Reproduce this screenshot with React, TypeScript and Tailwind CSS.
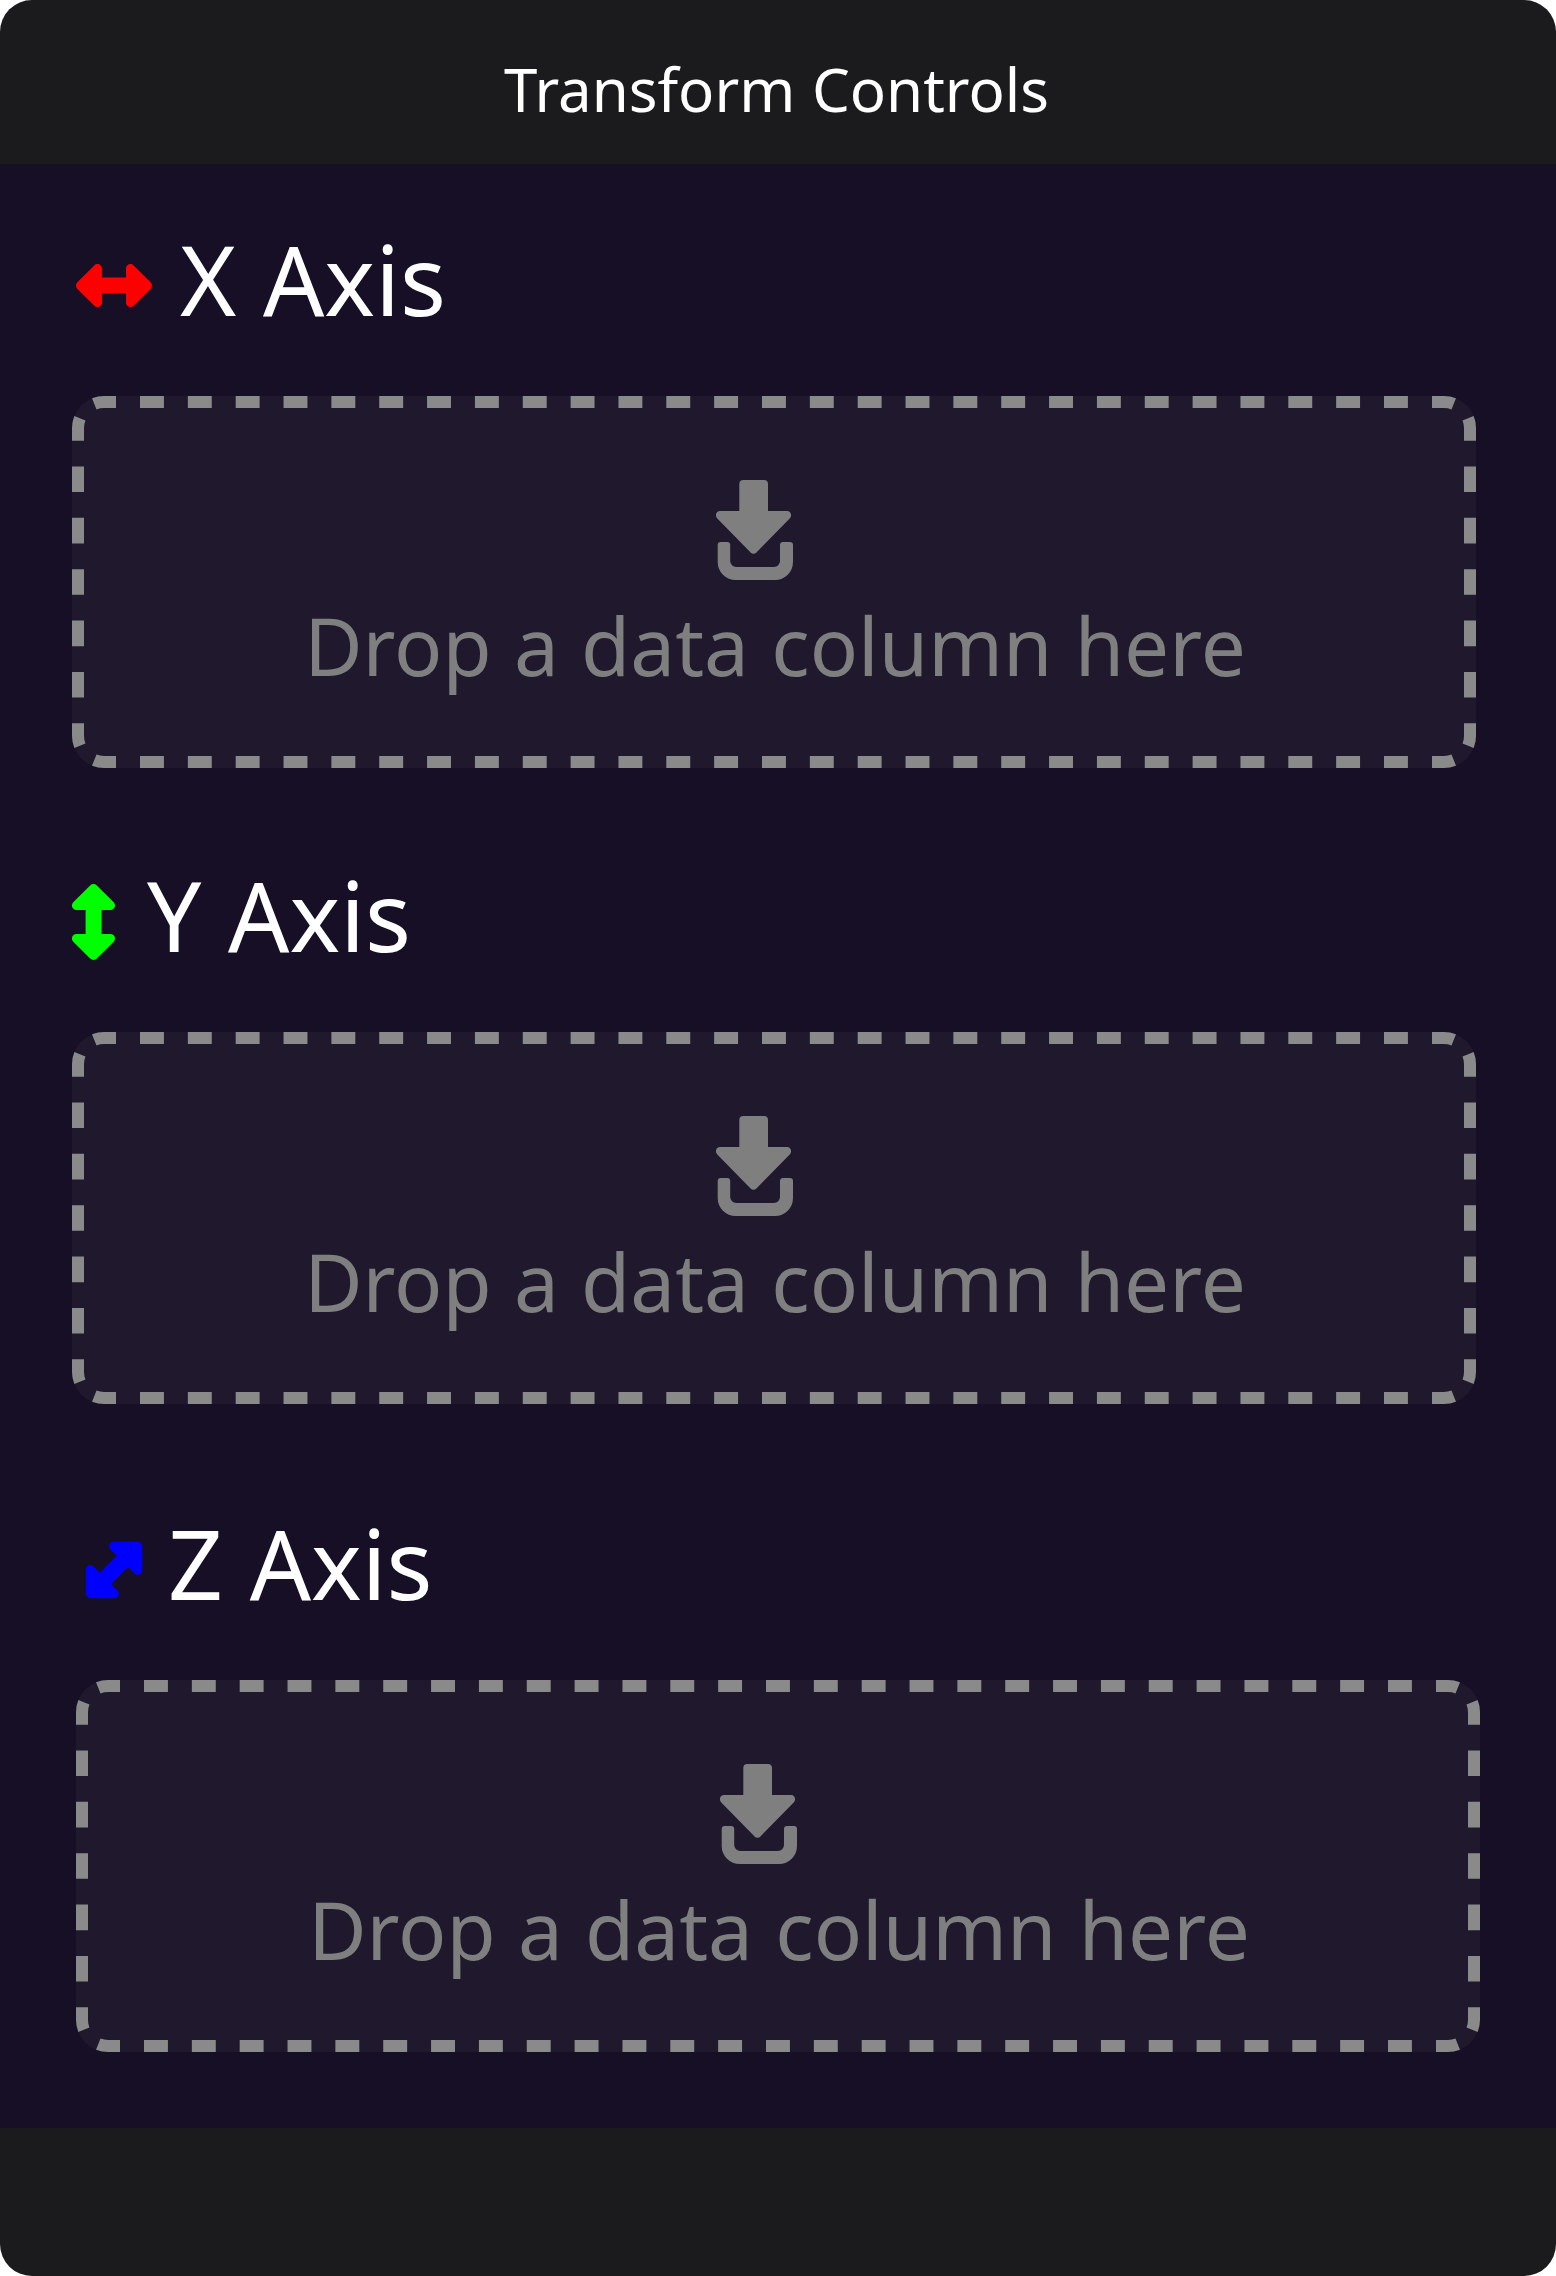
type Axis = {
  label: string;
  headingClass: string;
  sectionClass: string;
  icon: "horizontal" | "vertical" | "diagonal";
};

const AXES: Axis[] = [
  { label: "X Axis", headingClass: "ml-1 gap-7", sectionClass: "ml-[72px]", icon: "horizontal" },
  { label: "Y Axis", headingClass: "gap-8", sectionClass: "ml-[72px] mt-[91px]", icon: "vertical" },
  { label: "Z Axis", headingClass: "gap-4", sectionClass: "ml-[76px] mt-[103px]", icon: "diagonal" },
];

const ARROW =
  "M26 13.5V4.6C26 .5 21.1 -1.4 18.3 1.4L1.4 18.3a4.6 4.6 0 0 0 0 6.6L18.3 41.8C21.1 44.6 26 42.7 26 38.6V29.5H50V38.6C50 42.7 54.9 44.6 57.7 41.8L74.6 24.9a4.6 4.6 0 0 0 0-6.6L57.7 1.4C54.9 -1.4 50 .5 50 4.6V13.5Z";

function AxisIcon({ kind }: { kind: Axis["icon"] }) {
  if (kind === "vertical") {
    return (
      <svg className="mt-[14px] h-[76px] w-[43px] shrink-0 overflow-visible" viewBox="0 0 43 76" fill="#00ff00">
        <path d={ARROW} transform="translate(43.1 0) rotate(90)" />
      </svg>
    );
  }
  if (kind === "diagonal") {
    return (
      <svg className="mt-[14px] size-[76px] shrink-0 overflow-visible" viewBox="0 0 76 76" fill="#0000ff">
        <path d={ARROW} transform="rotate(-45 38 38) translate(0 16.4)" />
      </svg>
    );
  }
  return (
    <svg className="mt-[13px] h-[43px] w-[76px] shrink-0 overflow-visible" viewBox="0 0 76 43" fill="#ff0000">
      <path d={ARROW} />
    </svg>
  );
}

function DropIcon() {
  return (
    <svg className="mr-[39px] h-[100px] w-[77px] shrink-0" viewBox="0 0 77 100" fill="#7f7f80">
      <path d="M27.3 0H48a4 4 0 0 1 4 4V31H71C74.9 31 76.4 35.7 73.7 38.4L40.4 72.5a4 4 0 0 1-5.8 0L1.3 38.4C-1.4 35.7 .1 31 4 31H23.3V4a4 4 0 0 1 4-4Z" />
      <path d="M4.7 62H11.2a3 3 0 0 1 3 3V81a6 6 0 0 0 6 6H58a6 6 0 0 0 6-6V65a3 3 0 0 1 3-3H74a3 3 0 0 1 3 3V82a18 18 0 0 1-18 18H19.7a18 18 0 0 1-18-18V65a3 3 0 0 1 3-3Z" />
    </svg>
  );
}

/* Dashed outline: evenly spaced dashes along each side, bent dashes at both ends of every corner. */
function DashedOutline() {
  return (
    <svg
      className="pointer-events-none absolute inset-0 size-full"
      viewBox="0 0 1404 372"
      fill="none"
      stroke="#8a8a8a"
      strokeWidth="12"
    >
      <path d="M68 6H1336M68 366H1336" strokeDasharray="23.92 23.926" />
      <path d="M6 70.4V301.6M1398 70.4V301.6" strokeDasharray="25.69 25.69" />
      <path d="M44 6H32A26 26 0 0 0 22.26 7.9M7.9 22.26A26 26 0 0 0 6 32V44.7" />
      <path d="M1360 6H1372A26 26 0 0 1 1381.74 7.9M1396.1 22.26A26 26 0 0 1 1398 32V44.7" />
      <path d="M44 366H32A26 26 0 0 1 22.26 364.1M7.9 349.74A26 26 0 0 1 6 340V327.3" />
      <path d="M1360 366H1372A26 26 0 0 0 1381.74 364.1M1396.1 349.74A26 26 0 0 0 1398 340V327.3" />
    </svg>
  );
}

export default function App() {
  return (
    <div className="min-h-[2276px] bg-white font-['Noto_Sans',sans-serif]">
      <div className="flex h-[2276px] w-[1556px] flex-col overflow-hidden rounded-[32px] bg-[#1b1b1d]">
        <header className="flex h-[164px] shrink-0 justify-center pt-12 pr-[3px]">
          <h1 className="text-[60px] leading-[82px] text-white [word-spacing:1px]">Transform Controls</h1>
        </header>
        <main className="flex h-[1964px] shrink-0 flex-col bg-[#170f26] pt-[59px]">
          {AXES.map((axis) => (
            <section key={axis.label} className={axis.sectionClass}>
              <div className={`flex h-28 items-center ${axis.headingClass}`}>
                <AxisIcon kind={axis.icon} />
                <h2 className="text-[96px] leading-[112px] whitespace-nowrap text-white [word-spacing:1.8px]">
                  {axis.label}
                </h2>
              </div>
              <div className="relative mt-[61px] flex h-[372px] w-[1404px] flex-col items-center rounded-[32px] bg-[#20182c] pt-[84px]">
                <DashedOutline />
                <DropIcon />
                <p className="mt-[13px] pl-[2px] text-[80px] leading-[104px] whitespace-nowrap text-[#7f7f80] [word-spacing:1.5px]">
                  Drop a data column here
                </p>
              </div>
            </section>
          ))}
        </main>
      </div>
    </div>
  );
}
